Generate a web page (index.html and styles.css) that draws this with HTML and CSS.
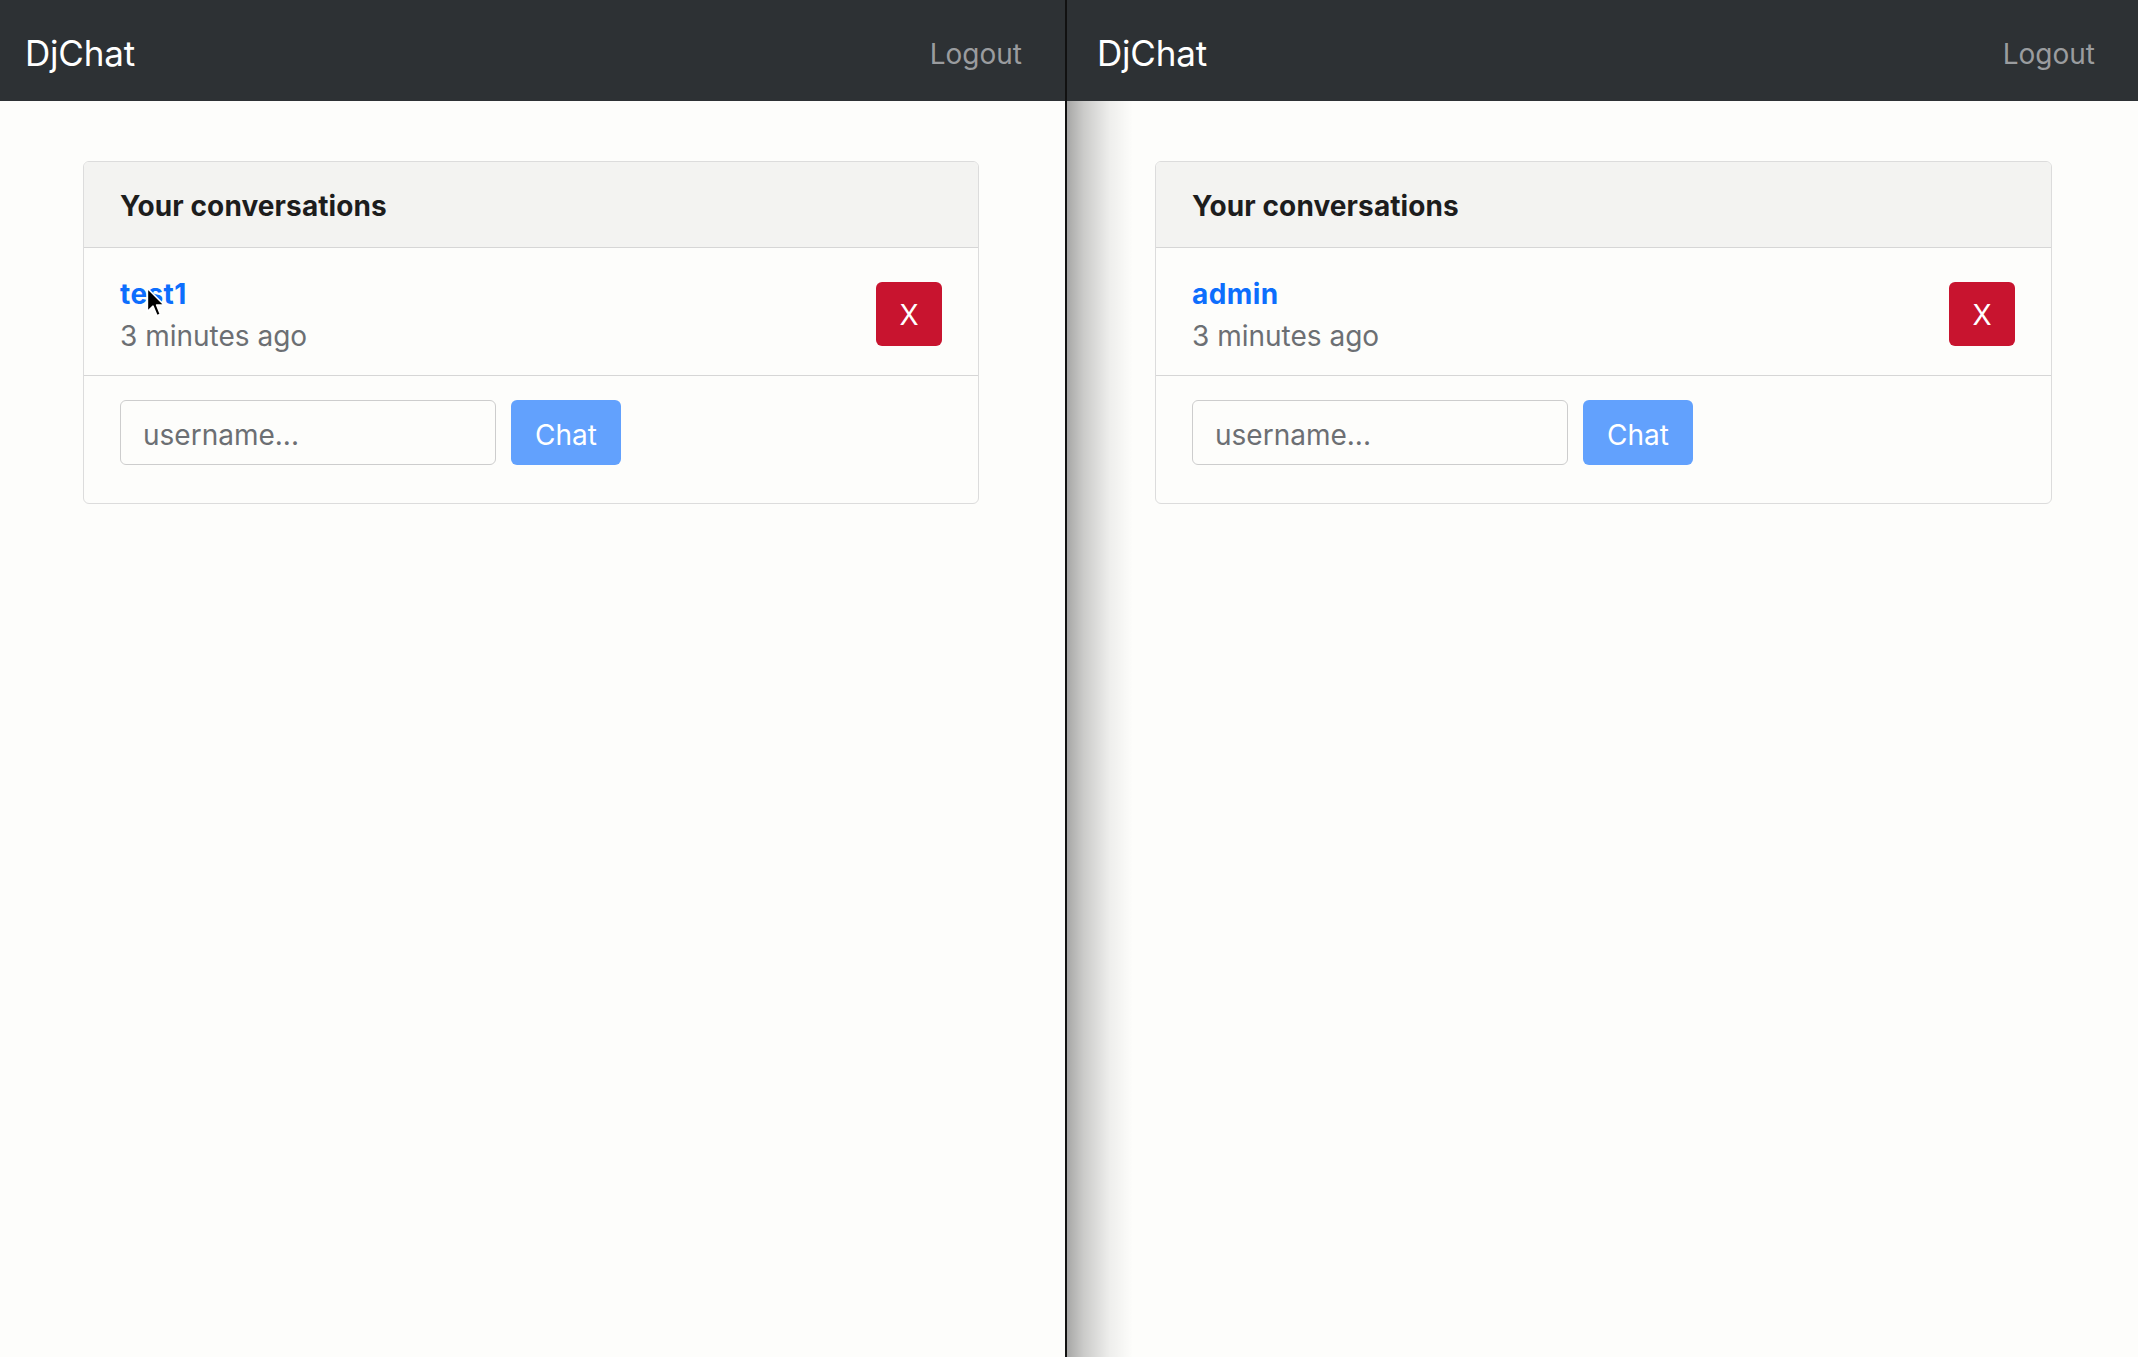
FILE: index.html
```html
<!DOCTYPE html>
<html lang="en">
<head>
<meta charset="utf-8">
<title>DjChat</title>
<link rel="stylesheet" href="styles.css">
</head>
<body>
<div class="screen">
  <div class="pane pane-left">
    <nav class="navbar">
      <span class="brand">DjChat</span>
      <a class="nav-link">Logout</a>
    </nav>
    <main class="content">
      <section class="card">
        <header class="card-header">Your conversations</header>
        <div class="conv-row">
          <div class="conv-info">
            <a class="conv-name">test1</a>
            <div class="conv-time">3 minutes ago</div>
          </div>
          <button class="btn-delete">X</button>
        </div>
        <form class="new-chat">
          <input class="username" type="text" placeholder="username...">
          <button class="btn-chat" type="button">Chat</button>
        </form>
      </section>
    </main>
    <svg class="cursor" viewBox="0 0 16 26" width="20" height="32">
      <path d="M1 1 L1 20 L5.6 15.6 L8.8 23.4 L11.6 22.2 L8.5 14.6 L14.6 14.6 Z" fill="#000" stroke="#fff" stroke-width="1.3" stroke-linejoin="round"/>
    </svg>
  </div>
  <div class="divider"></div>
  <div class="pane pane-right">
    <nav class="navbar">
      <span class="brand">DjChat</span>
      <a class="nav-link">Logout</a>
    </nav>
    <main class="content">
      <section class="card">
        <header class="card-header">Your conversations</header>
        <div class="conv-row">
          <div class="conv-info">
            <a class="conv-name">admin</a>
            <div class="conv-time">3 minutes ago</div>
          </div>
          <button class="btn-delete">X</button>
        </div>
        <form class="new-chat">
          <input class="username" type="text" placeholder="username...">
          <button class="btn-chat" type="button">Chat</button>
        </form>
      </section>
    </main>
  </div>
</div>
</body>
</html>
```
FILE: styles.css
```css
html, body {
  margin: 0;
  padding: 0;
  height: 100%;
}
body {
  background: #fdfdfb;
  font-family: Inter, "Noto Sans", sans-serif;
  overflow: hidden;
}
.screen {
  display: flex;
  width: 2138px;
  height: 1357px;
  overflow: hidden;
}
.pane {
  position: relative;
  height: 100%;
  background: #fdfdfb;
}
.pane-left {
  flex: none;
  width: 1070px;
  margin-left: -5px;
}
.divider {
  flex: none;
  width: 2px;
  background: #111;
}
.pane-right {
  flex: 1;
  min-width: 0;
}
.pane-right::before {
  content: "";
  position: absolute;
  left: 0;
  top: 101px;
  bottom: 0;
  width: 66px;
  background: linear-gradient(to right, rgba(0,0,0,0.34) 0%, rgba(0,0,0,0.2) 25%, rgba(0,0,0,0.06) 65%, rgba(0,0,0,0) 100%);
  pointer-events: none;
}
.navbar {
  box-sizing: border-box;
  height: 101px;
  background: #2d3134;
  display: flex;
  align-items: center;
  justify-content: space-between;
  padding: 0 43px 0 30px;
}
.brand {
  color: #ffffff;
  font-size: 35px;
  letter-spacing: -0.2px;
  padding-top: 5px;
}
.nav-link {
  color: #9a9c9f;
  font-size: 28px;
  padding-top: 7px;
}
.content {
  padding: 60px 86px 0 88px;
}
.card {
  border: 1px solid #dcdcdc;
  border-radius: 6px;
  background: #fdfdfb;
  overflow: hidden;
}
.card-header {
  box-sizing: border-box;
  height: 86px;
  display: flex;
  align-items: center;
  padding: 3px 36px 0;
  background: #f3f3f1;
  border-bottom: 1px solid #d6d6d6;
  color: #1d1d1d;
  font-size: 28px;
  font-weight: 700;
  letter-spacing: 0.1px;
}
.conv-row {
  display: flex;
  align-items: center;
  justify-content: space-between;
  padding: 22px 36px 18px;
  border-bottom: 1px solid #d6d6d6;
}
.conv-info {
  padding-top: 3px;
}
.conv-name {
  display: block;
  color: #0d6efd;
  font-size: 28px;
  font-weight: 700;
  line-height: 42px;
  letter-spacing: 0.4px;
}
.conv-time {
  color: #6c6f73;
  font-size: 28px;
  line-height: 42px;
}
.btn-delete {
  width: 66px;
  height: 64px;
  border: 0;
  border-radius: 6px;
  background: #c8142f;
  color: #ffffff;
  font-family: Inter, "Noto Sans", sans-serif;
  font-size: 28px;
  padding: 2px 0 0;
}
.new-chat {
  display: flex;
  gap: 15px;
  margin: 0;
  padding: 24px 36px 38px;
}
.username {
  box-sizing: border-box;
  width: 376px;
  height: 65px;
  border: 1px solid #cdcdcd;
  border-radius: 6px;
  padding: 5px 22px 0;
  background: #fdfdfb;
  color: #333;
  font-family: Inter, "Noto Sans", sans-serif;
  font-size: 28px;
}
.username::placeholder {
  color: #6c6f73;
}
.btn-chat {
  width: 110px;
  height: 65px;
  border: 0;
  border-radius: 6px;
  background: #62a1fd;
  color: #ffffff;
  font-family: Inter, "Noto Sans", sans-serif;
  font-size: 28px;
  padding: 5px 0 0;
}
.cursor {
  position: absolute;
  left: 151px;
  top: 287px;
}
```
